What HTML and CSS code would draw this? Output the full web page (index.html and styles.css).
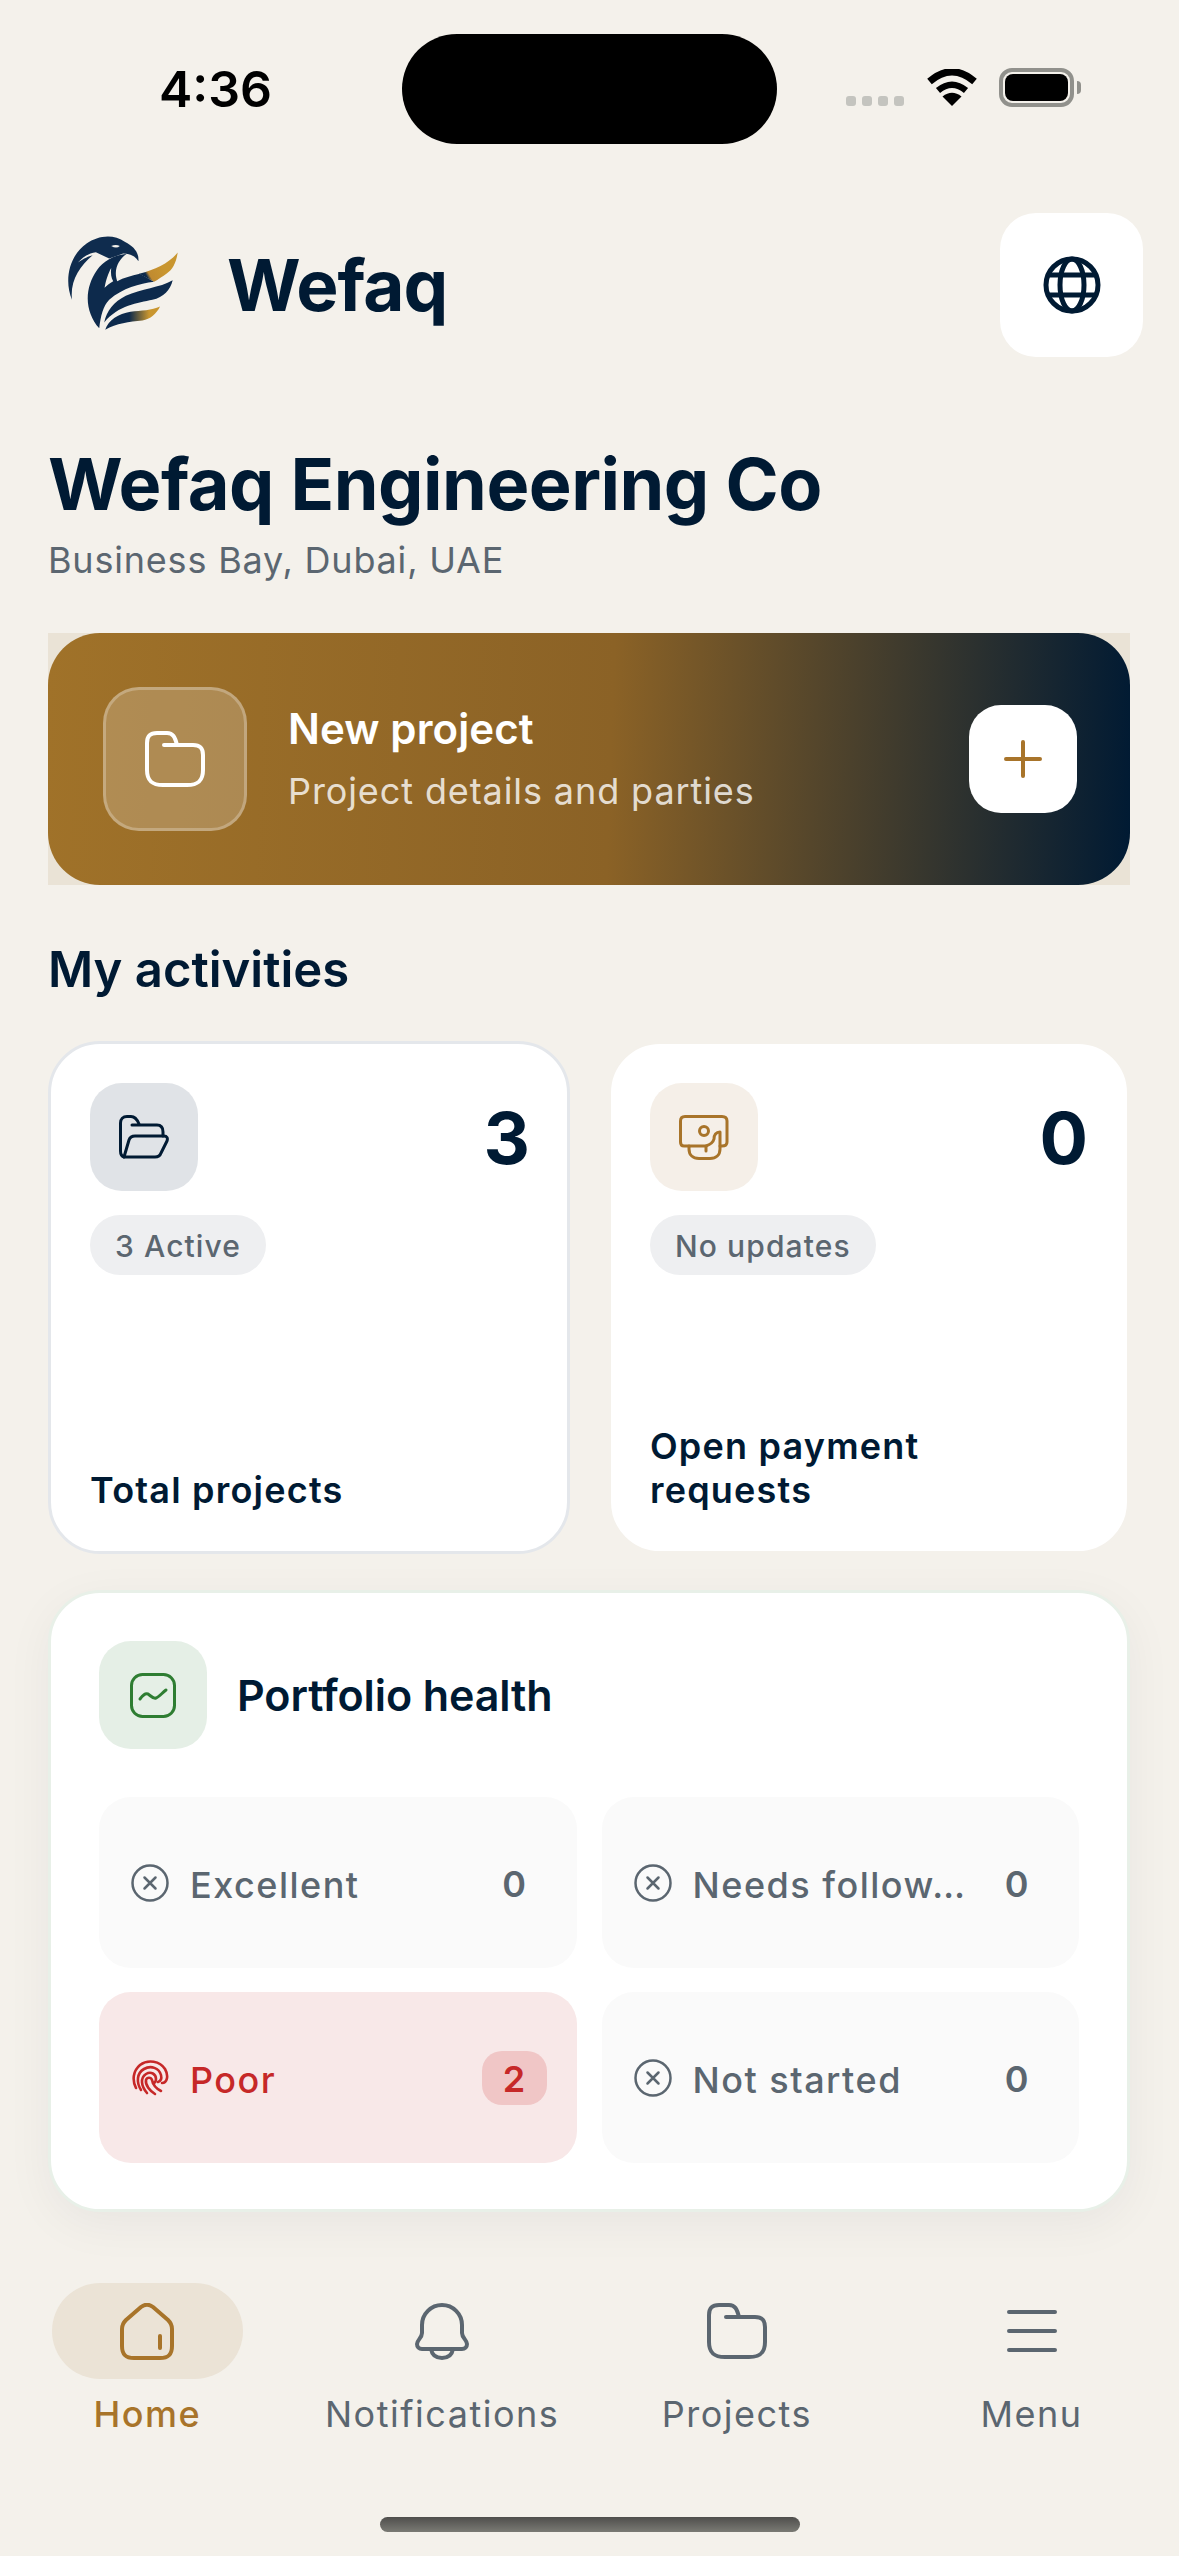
FILE: index.html
```html
<!DOCTYPE html>
<html lang="en">
<head>
  <meta charset="UTF-8">
  <meta name="viewport" content="width=device-width, initial-scale=1.0">
  <title>Wefaq</title>
  <link rel="stylesheet" href="styles.css">
</head>
<body>
  <div class="status-bar">
    <div class="status-time">4:36</div>
    <div class="island"></div>
    <div class="status-icons">
      <div class="signal"><span></span><span></span><span></span><span></span></div>
      <svg class="wifi" width="50" height="37" viewBox="0 0 50 37">
        <path d="M25 37 L15.5 27.5 Q25 20 34.500 27.500 Z" fill="#000"/>
        <path d="M11 21.500 Q25 10 39 21.500" fill="none" stroke="#000" stroke-width="6.500"/>
        <path d="M2.500 12.500 Q25 -7 47.500 12.500" fill="none" stroke="#000" stroke-width="7"/>
      </svg>
      <div class="battery"><div class="battery-fill"></div></div>
      <div class="battery-tip"></div>
    </div>
  </div>

  <div class="app-header">
    <div class="brand">
      <svg class="logo" width="113" height="97" viewBox="110 65 340 290">
        <defs>
          <linearGradient id="wing-top" x1="330" y1="200" x2="400" y2="160" gradientUnits="userSpaceOnUse">
            <stop offset="0.3" stop-color="#0d2a4c"/>
            <stop offset="0.42" stop-color="#c08a30"/>
            <stop offset="1" stop-color="#c9962f"/>
          </linearGradient>
          <linearGradient id="wing-low" x1="300" y1="310" x2="360" y2="310" gradientUnits="userSpaceOnUse">
            <stop offset="0" stop-color="#0d2a4c"/>
            <stop offset="1" stop-color="#c9962f"/>
          </linearGradient>
        </defs>
        <path d="M128 262 C104 205 118 130 172 93 C205 70 250 62 288 88 C312 100 330 118 328 146 C320 132 306 124 282 123 L240 138 L200 119 C178 122 160 134 146 150 C165 137 178 131 190 128 C150 162 122 205 128 262 Z" fill="#0f2c4e"/>
        <path d="M246 100 Q260 94 272 100 Q262 110 246 100 Z" fill="#f4f1eb"/>
        <path d="M210 348 C168 300 162 232 204 172 C222 146 256 126 292 124 C268 142 252 170 264 206 C284 196 306 190 332 184 L375 208 C330 214 282 226 240 262 C222 280 214 312 210 348 Z" fill="#0d2a4c"/>
        <path d="M226 226 C230 202 238 180 246 166 C244 182 246 196 252 206 C242 212 234 218 226 226 Z" fill="#f4f1eb"/>
        <path d="M330 184 C380 170 420 152 446 120 C442 150 430 172 414 182 C400 192 388 200 375 208 Z" fill="url(#wing-top)"/>
        <path d="M225 330 C232 296 254 268 290 250 C336 228 392 226 431 203 C424 232 404 254 370 262 C326 272 268 278 225 330 Z" fill="#0d2a4c"/>
        <path d="M228 352 C238 322 268 304 304 298 C336 294 368 294 393 282 C382 304 364 320 340 324 C300 328 262 332 228 352 Z" fill="url(#wing-low)"/>
      </svg>
      <span class="brand-name">Wefaq</span>
    </div>
    <div class="globe-btn">
      <svg width="60" height="60" viewBox="0 0 60 60" fill="none" stroke="#001a33" stroke-width="5">
        <circle cx="30" cy="30" r="26"/>
        <ellipse cx="30" cy="30" rx="12" ry="26"/>
        <path d="M5 20 H55 M5 40 H55"/>
      </svg>
    </div>
  </div>

  <div class="content">
    <h1 class="company">Wefaq Engineering Co</h1>
    <p class="location">Business Bay, Dubai, UAE</p>

    <div class="new-project">
      <div class="new-project-inner">
        <div class="new-project-icon">
          <svg width="60" height="56" viewBox="0 0 60 56" fill="none" stroke="#fff" stroke-width="4" stroke-linecap="round" stroke-linejoin="round">
            <path d="M19 14 H48 C55 14 58 17 58 24 V39 C58 50 53 54 42 54 H18 C7 54 2 50 2 39 V12 C2 5 5 2 12 2 H22 C28 2 30 6 32 14"/>
          </svg>
        </div>
        <div class="new-project-text">
          <div class="new-project-title">New project</div>
          <div class="new-project-sub">Project details and parties</div>
        </div>
        <div class="plus-btn">
          <svg width="38" height="38" viewBox="0 0 38 38" stroke="#a8742a" stroke-width="4" stroke-linecap="round">
            <path d="M19 2 V36 M2 19 H36"/>
          </svg>
        </div>
      </div>
    </div>

    <h2 class="section-title">My activities</h2>

    <div class="stats">
      <div class="stat-card stat-card-outlined">
        <div class="stat-top">
          <div class="stat-icon stat-icon-navy">
            <svg width="50" height="45" viewBox="0 0 50 45" fill="none" stroke="#001a33" stroke-width="3" stroke-linecap="round" stroke-linejoin="round">
              <path d="M5 42 C2 41 1.500 39 1.500 36 V8 C1.500 4 4 1.500 8 1.500 H12 C16 1.500 18 4 20 9"/>
              <path d="M13 10 H38 C42 10 44 12 44 17 V21"/>
              <path d="M5 42 H36 C39 42 41 41 42 38 L48 26 C49 23 48 21 45 21 H16 C13 21 11 22 10 25 L5 42 Z"/>
            </svg>
          </div>
          <div class="stat-number">3</div>
        </div>
        <span class="stat-badge">3 Active</span>
        <div class="stat-label">Total projects</div>
      </div>
      <div class="stat-card">
        <div class="stat-top">
          <div class="stat-icon stat-icon-gold">
            <svg width="50" height="45" viewBox="0 0 50 45" fill="none" stroke="#a8742a" stroke-width="3" stroke-linecap="round" stroke-linejoin="round">
              <path d="M10 31 H5 C3 31 1.500 29.500 1.500 27 V6 C1.500 3 3 1.500 6 1.500 H43 C46 1.500 48 3 48 6 V27 C48 29.500 46 31 43 31 H41"/>
              <circle cx="25" cy="16" r="4.500"/>
              <path d="M10 31 V34 C10 40 14 43.500 20 43.500 H31 C37 43.500 41 40 41 34 V17 C37 17 35 20 35 24 C34 28 30 30 27 31 H10"/>
              <path d="M27 31 V36"/>
            </svg>
          </div>
          <div class="stat-number">0</div>
        </div>
        <span class="stat-badge">No updates</span>
        <div class="stat-label">Open payment requests</div>
      </div>
    </div>

    <div class="health">
      <div class="health-head">
        <div class="stat-icon stat-icon-green">
          <svg width="46" height="45" viewBox="0 0 46 45" fill="none" stroke="#2e7d32" stroke-width="3" stroke-linecap="round" stroke-linejoin="round">
            <rect x="1.500" y="1.500" width="43" height="42" rx="11"/>
            <path d="M10 26 C13 22 15 20 18 21 C21 23 23 26 26 25 C29 24 32 20 36 17"/>
          </svg>
        </div>
        <div class="health-title">Portfolio health</div>
      </div>
      <div class="health-grid">
        <div class="tile">
          <svg class="tile-icon" width="38" height="38" viewBox="0 0 38 38" fill="none" stroke="#5b6670" stroke-width="2.500" stroke-linecap="round">
            <circle cx="19" cy="19" r="17.500"/>
            <path d="M13.500 13.500 L24.500 24.500 M24.500 13.500 L13.500 24.500"/>
          </svg>
          <span class="tile-label">Excellent</span>
          <span class="tile-count">0</span>
        </div>
        <div class="tile">
          <svg class="tile-icon" width="38" height="38" viewBox="0 0 38 38" fill="none" stroke="#5b6670" stroke-width="2.500" stroke-linecap="round">
            <circle cx="19" cy="19" r="17.500"/>
            <path d="M13.500 13.500 L24.500 24.500 M24.500 13.500 L13.500 24.500"/>
          </svg>
          <span class="tile-label">Needs follow…</span>
          <span class="tile-count">0</span>
        </div>
        <div class="tile tile-poor">
          <svg class="tile-icon" width="38" height="38" viewBox="0 0 38 38" fill="none" stroke="#c62828" stroke-width="2.600" stroke-linecap="round">
            <path d="M5 29 C1 21 2 12 9 6 C17 0 29 2 34 10 C38 17 36 24 31 24"/>
            <path d="M10 31 C5 23 6 14 13 10 C20 6 28 9 30 16 C31 20 30 22 27 23"/>
            <path d="M16 34 C10 27 9 19 15 15 C20 12 25 15 25 20 C25 22 24 24 22 24"/>
            <path d="M24 35 C19 32 14 26 15 21 C16 18 20 18 21 21 C22 26 26 30 30 32"/>
          </svg>
          <span class="tile-label">Poor</span>
          <span class="tile-count">2</span>
        </div>
        <div class="tile">
          <svg class="tile-icon" width="38" height="38" viewBox="0 0 38 38" fill="none" stroke="#5b6670" stroke-width="2.500" stroke-linecap="round">
            <circle cx="19" cy="19" r="17.500"/>
            <path d="M13.500 13.500 L24.500 24.500 M24.500 13.500 L13.500 24.500"/>
          </svg>
          <span class="tile-label">Not started</span>
          <span class="tile-count">0</span>
        </div>
      </div>
    </div>
  </div>

  <div class="bottom-nav">
    <div class="nav-item nav-item-active">
      <div class="nav-pill">
        <svg width="54" height="57" viewBox="0 0 54 57" fill="none" stroke="#a8742a" stroke-width="4" stroke-linecap="round" stroke-linejoin="round">
          <path d="M21 4 L6 17 C3 20 2 22 2 26 V43 C2 52 6 55 14 55 H40 C48 55 52 52 52 43 V26 C52 22 51 20 48 17 L33 4 C29 1 25 1 21 4 Z"/>
          <path d="M40 33 V45"/>
        </svg>
      </div>
      <span class="nav-label">Home</span>
    </div>
    <div class="nav-item">
      <div class="nav-pill">
        <svg width="54" height="57" viewBox="0 0 54 57" fill="none" stroke="#5b6670" stroke-width="4" stroke-linecap="round" stroke-linejoin="round">
          <path d="M27 2 C16 2 7 11 7 22 V30 C7 35 2 37 2 41 C2 44 4 46 7 46 H47 C50 46 52 44 52 41 C52 37 47 35 47 30 V22 C47 11 38 2 27 2 Z"/>
          <path d="M16 46 C17 52 21 55 27 55 C33 55 37 52 38 46"/>
        </svg>
      </div>
      <span class="nav-label">Notifications</span>
    </div>
    <div class="nav-item">
      <div class="nav-pill">
        <svg width="60" height="56" viewBox="0 0 60 56" fill="none" stroke="#5b6670" stroke-width="4" stroke-linecap="round" stroke-linejoin="round">
          <path d="M19 14 H48 C55 14 58 17 58 24 V39 C58 50 53 54 42 54 H18 C7 54 2 50 2 39 V12 C2 5 5 2 12 2 H22 C28 2 30 6 32 14"/>
        </svg>
      </div>
      <span class="nav-label">Projects</span>
    </div>
    <div class="nav-item">
      <div class="nav-pill">
        <svg width="50" height="44" viewBox="0 0 50 44" stroke="#5b6670" stroke-width="4" stroke-linecap="round">
          <path d="M2 3 H48 M2 22 H48 M2 41 H48"/>
        </svg>
      </div>
      <span class="nav-label">Menu</span>
    </div>
  </div>

  <div class="home-indicator"></div>
</body>
</html>
```

FILE: styles.css
```css
body {
  margin: 0;
  width: 1179px;
  height: 2556px;
  overflow: hidden;
  background-color: #f4f1eb;
  font-family: Inter, "Noto Sans", sans-serif;
  color: #001a33;
}

/* status bar */
.status-bar {
  height: 213px;
  display: flex;
  align-items: flex-start;
}
.status-time {
  width: 402px;
  box-sizing: border-box;
  padding: 58px 0 0 159px;
  font-size: 50px;
  line-height: 62px;
  font-weight: 600;
  color: #000;
}
.island {
  width: 375px;
  height: 110px;
  margin-top: 34px;
  background-color: #000;
  border-radius: 55px;
}
.status-icons {
  display: flex;
  align-items: flex-start;
  margin-left: 69px;
  margin-top: 68px;
}
.signal {
  display: flex;
  gap: 6px;
  margin-top: 28px;
  margin-right: 23px;
}
.signal span {
  width: 10px;
  height: 10px;
  background-color: #c4c4bf;
  border-radius: 3px;
}
.wifi {
  margin-top: 1px;
  margin-right: 22px;
}
.battery {
  width: 75px;
  height: 39px;
  box-sizing: border-box;
  border: 4px solid #91918c;
  border-radius: 13px;
  padding: 2px;
}
.battery-fill {
  height: 100%;
  background-color: #000;
  border-radius: 8px;
}
.battery-tip {
  width: 4px;
  height: 13px;
  margin-top: 13px;
  margin-left: 3px;
  background-color: #91918c;
  border-radius: 0 4px 4px 0;
}

/* logo row */
.app-header {
  display: flex;
  justify-content: space-between;
  padding: 0 36px 0 66px;
}
.brand {
  display: flex;
  align-items: center;
  gap: 48px;
}
.logo {
  margin-bottom: 6px;
}
.brand-name {
  font-size: 71px;
  font-weight: 700;
  letter-spacing: -1px;
}
.globe-btn {
  width: 143px;
  height: 144px;
  display: flex;
  align-items: center;
  justify-content: center;
  background-color: #fff;
  border-radius: 36px;
}

.content {
  padding: 0 49px 0 48px;
}
.company {
  margin: 79px 0 0;
  font-size: 72px;
  line-height: 96px;
  font-weight: 700;
  letter-spacing: -0.5px;
}
.location {
  margin: 5px 0 50px;
  font-size: 36px;
  line-height: 46px;
  letter-spacing: 0.8px;
  color: #5b6670;
}

/* new project banner */
.new-project {
  background-color: #eae3d6;
}
.new-project-inner {
  height: 252px;
  display: flex;
  align-items: center;
  padding: 0 53px 0 55px;
  border-radius: 52px;
  background: linear-gradient(92deg, #a07229 0%, #8b6226 52%, #001a33 100%);
}
.new-project-icon {
  width: 144px;
  height: 144px;
  box-sizing: border-box;
  display: flex;
  align-items: center;
  justify-content: center;
  border: 3px solid rgba(255, 255, 255, 0.25);
  border-radius: 36px;
  background-color: rgba(255, 255, 255, 0.2);
}
.new-project-text {
  flex: 1;
  margin-left: 41px;
}
.new-project-title {
  font-size: 42px;
  line-height: 48px;
  font-weight: 600;
  letter-spacing: 0.1px;
  color: #fff;
}
.new-project-sub {
  margin-top: 16px;
  font-size: 36px;
  line-height: 44px;
  letter-spacing: 0.9px;
  color: rgba(255, 255, 255, 0.8);
}
.plus-btn {
  width: 108px;
  height: 108px;
  display: flex;
  align-items: center;
  justify-content: center;
  background-color: #fff;
  border-radius: 32px;
}

.section-title {
  margin: 56px 0 42px;
  font-size: 49px;
  line-height: 58px;
  font-weight: 600;
}

/* stat cards */
.stats {
  display: grid;
  grid-template-columns: 1fr 1fr;
  gap: 38px;
}
.stat-card {
  height: 513px;
  box-sizing: border-box;
  display: flex;
  flex-direction: column;
  align-items: flex-start;
  padding: 39px;
  background-color: #fff;
  border: 3px solid #f4f1eb;
  border-radius: 52px;
}
.stat-card-outlined {
  border-color: #e4e7eb;
}
.stat-card-outlined .stat-number {
  margin-right: -2px;
}
.stat-top {
  width: 100%;
  height: 108px;
  display: flex;
  justify-content: space-between;
}
.stat-icon {
  width: 108px;
  height: 108px;
  display: flex;
  align-items: center;
  justify-content: center;
  border-radius: 32px;
}
.stat-icon-navy {
  background-color: #e0e3e7;
}
.stat-icon-gold {
  background-color: #f5efe8;
}
.stat-icon-green {
  background-color: #e5efe6;
}
.stat-number {
  font-size: 72px;
  line-height: 110px;
  font-weight: 700;
}
.stat-badge {
  margin-top: 24px;
  padding: 2px 25px 0;
  font-size: 30px;
  line-height: 58px;
  font-weight: 500;
  letter-spacing: 1.1px;
  color: #5b6670;
  background-color: #eeeff1;
  border-radius: 30px;
}
.stat-label {
  margin-top: auto;
  font-size: 36px;
  line-height: 44px;
  font-weight: 600;
  letter-spacing: 1.2px;
}

/* portfolio health */
.health {
  margin-top: 36px;
  box-sizing: border-box;
  height: 622px;
  padding: 48px 48px 46px;
  background-color: #fff;
  border: 3px solid #e8f0e8;
  border-radius: 52px;
  box-shadow: 0 12px 48px rgba(0, 26, 51, 0.05);
}
.health-head {
  display: flex;
  align-items: center;
  gap: 30px;
}
.health-title {
  font-size: 43px;
  font-weight: 600;
  letter-spacing: -0.1px;
}
.health-grid {
  display: grid;
  grid-template-columns: 1fr 1fr;
  gap: 24px 25px;
  margin-top: 48px;
}
.tile {
  height: 171px;
  box-sizing: border-box;
  display: flex;
  align-items: center;
  padding: 0 30px 0 32px;
  background-color: #fafafa;
  border-radius: 32px;
  color: #5b6670;
}
.tile-poor {
  background-color: #f8e8e8;
  color: #c62828;
}
.tile-icon {
  flex-shrink: 0;
}
.tile-label {
  flex: 1;
  min-width: 0;
  margin-left: 21px;
  padding-top: 4px;
  font-size: 36px;
  font-weight: 500;
  letter-spacing: 1.5px;
  white-space: nowrap;
  overflow: hidden;
}
.tile-count {
  width: 65px;
  height: 54px;
  box-sizing: border-box;
  padding-top: 2px;
  display: flex;
  align-items: center;
  justify-content: center;
  font-size: 36px;
  font-weight: 600;
  border-radius: 20px;
}
.tile-poor .tile-count {
  background-color: #f0c6c6;
}

/* bottom nav */
.bottom-nav {
  display: flex;
  margin-top: 71px;
}
.nav-item {
  flex: 1;
  display: flex;
  flex-direction: column;
  align-items: center;
  color: #5b6670;
}
.nav-pill {
  width: 191px;
  height: 96px;
  display: flex;
  align-items: center;
  justify-content: center;
  border-radius: 48px;
}
.nav-item-active .nav-pill {
  background-color: #ebe3d6;
}
.nav-item-active {
  color: #a8742a;
}
.nav-item-active .nav-label {
  font-weight: 500;
}
.nav-label {
  margin-top: 13px;
  font-size: 36px;
  line-height: 44px;
  letter-spacing: 1.5px;
}
.home-indicator {
  width: 420px;
  height: 15px;
  margin: 81px auto 0;
  border-radius: 8px;
  background: linear-gradient(#4f4e4c, #7a7a74);
}
```
